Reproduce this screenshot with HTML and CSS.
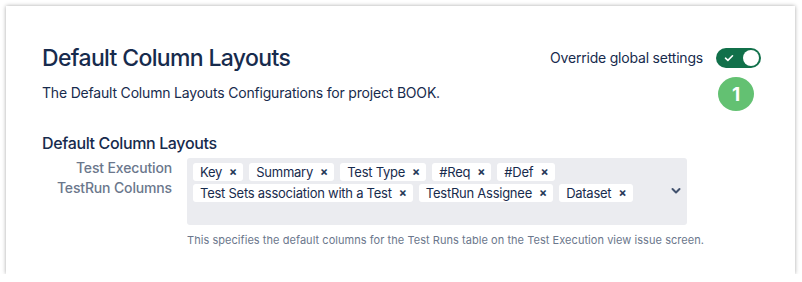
FILE: index.html
```html
<!DOCTYPE html>
<html>
<head>
<meta charset="utf-8">
<link rel="stylesheet" href="styles.css">
</head>
<body>
<div class="card">
  <div class="header">
    <h1 class="title">Default Column Layouts</h1>
    <div class="override">
      <span class="override-label">Override global settings</span>
      <span class="toggle">
        <svg class="toggle-check" width="12" height="12" viewBox="0 0 12 12"><path d="M2.5 6.2 L4.9 8.4 L9.5 3.8" fill="none" stroke="#fff" stroke-width="1.6" stroke-linecap="round" stroke-linejoin="round"/></svg>
        <span class="toggle-knob"></span>
      </span>
    </div>
  </div>
  <p class="desc">The Default Column Layouts Configurations for project BOOK.</p>
  <span class="badge">1</span>
  <h2 class="subtitle">Default Column Layouts</h2>
  <div class="field">
    <label class="field-label">Test Execution<br>TestRun Columns</label>
    <div class="field-body">
      <div class="select">
        <div class="tags">
          <span class="tag">Key<span class="x">×</span></span>
          <span class="tag">Summary<span class="x">×</span></span>
          <span class="tag">Test Type<span class="x">×</span></span>
          <span class="tag">#Req<span class="x">×</span></span>
          <span class="tag">#Def<span class="x">×</span></span>
          <span class="tag">Test Sets association with a Test<span class="x">×</span></span>
          <span class="tag">TestRun Assignee<span class="x">×</span></span>
          <span class="tag">Dataset<span class="x">×</span></span>
        </div>
        <svg class="chevron" width="10" height="8" viewBox="0 0 10 8"><path d="M1.5 2 L5 5.5 L8.5 2" fill="none" stroke="#42526E" stroke-width="2" stroke-linecap="round" stroke-linejoin="round"/></svg>
      </div>
      <p class="help">This specifies the default columns for the Test Runs table on the Test Execution view issue screen.</p>
    </div>
  </div>
</div>
</body>
</html>
```

FILE: styles.css
```css
* { box-sizing: border-box; }
html, body { margin: 0; padding: 0; background: #fff; }
body {
  font-family: Inter, "Noto Sans", sans-serif;
  color: #172B4D;
}
.card {
  position: relative;
  margin: 6px 0 0 6px;
  width: 789px;
  height: 268px;
  background: #fff;
  box-shadow: 0 0 4px rgba(0,0,0,0.35);
  padding: 38px 34px 0 36px;
}
.header {
  display: flex;
  align-items: center;
  justify-content: space-between;
  height: 28px;
}
.title {
  margin: 0;
  font-size: 23px;
  line-height: 28px;
  font-weight: 500;
  letter-spacing: -0.65px;
}
.override {
  display: flex;
  align-items: center;
  gap: 13px;
}
.override-label {
  font-size: 14px;
  line-height: 20px;
  letter-spacing: -0.2px;
}
.toggle {
  position: relative;
  display: flex;
  align-items: center;
  width: 45px;
  height: 20px;
  border-radius: 10px;
  background: #11704A;
  padding: 0 2px 0 7px;
  justify-content: space-between;
}
.toggle-knob {
  width: 16px;
  height: 16px;
  border-radius: 50%;
  background: #fff;
}
.desc {
  margin: 11px 0 0;
  font-size: 14px;
  line-height: 20px;
  letter-spacing: -0.19px;
}
.badge {
  position: absolute;
  left: 712px;
  top: 71px;
  width: 36px;
  height: 34px;
  border-radius: 50%;
  background: #63C172;
  color: #fff;
  font-weight: 700;
  font-size: 19px;
  display: flex;
  align-items: center;
  justify-content: center;
}
.subtitle {
  margin: 30px 0 0;
  font-size: 16px;
  line-height: 20px;
  font-weight: 500;
  letter-spacing: -0.36px;
}
.field {
  display: flex;
  gap: 15px;
  margin-top: 5px;
}
.field-label {
  width: 130px;
  text-align: right;
  font-size: 14px;
  line-height: 20px;
  font-weight: 500;
  color: #6B778C;
  letter-spacing: -0.15px;
}
.field-body { width: 500px; }
.select {
  display: flex;
  height: 67px;
  background: #EBECF0;
  border-radius: 3px;
  padding: 5px 0 0 6px;
  align-items: flex-start;
}
.tags {
  flex: 1;
  display: flex;
  flex-wrap: wrap;
  gap: 3px 6px;
  align-content: flex-start;
}
.tag {
  display: inline-flex;
  align-items: center;
  height: 18px;
  background: #fff;
  border-radius: 3px;
  padding: 0 6px 0 7px;
  font-size: 13px;
  line-height: 18px;
  letter-spacing: -0.25px;
}
.x {
  margin-left: 7px;
  font-size: 12px;
  font-weight: 700;
  color: #253858;
  letter-spacing: 0;
}
.chevron {
  margin: 24px 6px 0 0;
}
.help {
  margin: 7px 0 0;
  font-size: 11px;
  line-height: 16px;
  color: #6B778C;
  white-space: nowrap;
  letter-spacing: 0.05px;
}
```
